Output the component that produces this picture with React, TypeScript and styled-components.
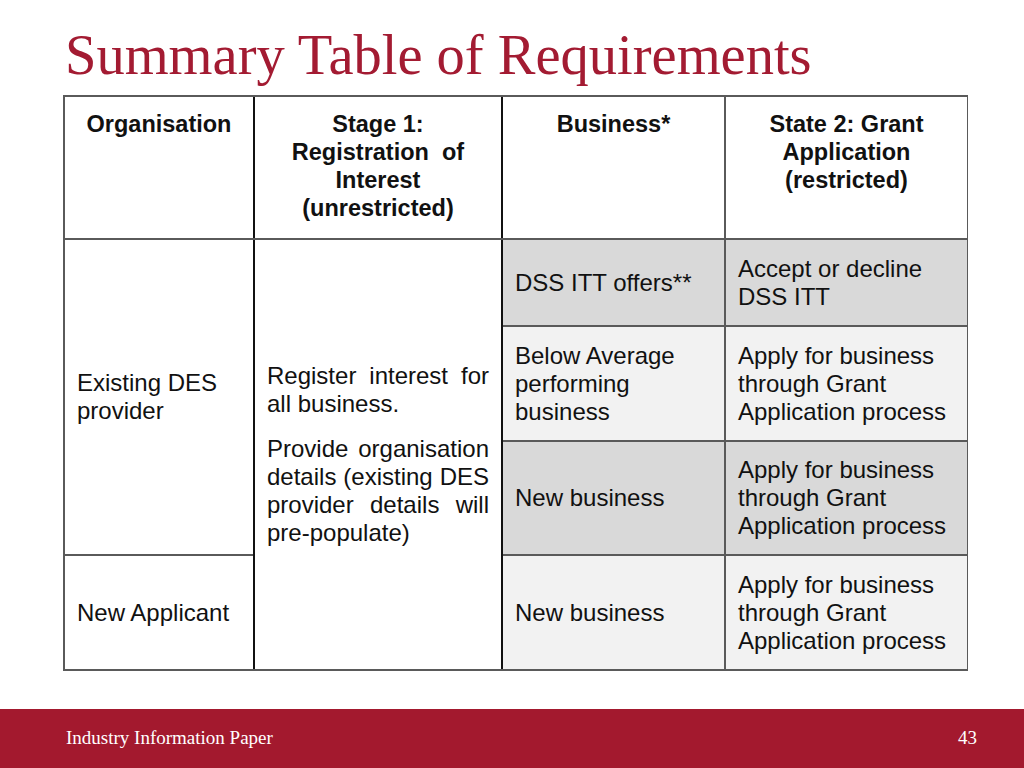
import * as React from 'react';
import styled, { createGlobalStyle } from 'styled-components';

const GlobalStyle = createGlobalStyle`
  html, body {
    margin: 0;
    padding: 0;
    background: #ffffff;
  }
  body {
    font-family: 'Liberation Sans', Arial, sans-serif;
  }
`;

const Slide = styled.div`
  width: 1024px;
  height: 768px;
  display: flex;
  flex-direction: column;
  overflow: hidden;
  background: #ffffff;
`;

const Title = styled.h1`
  margin: 0;
  padding: 20px 0 0 65px;
  height: 75px;
  font-family: 'Liberation Serif', 'Times New Roman', serif;
  font-weight: normal;
  font-size: 56.5px;
  line-height: 70px;
  color: #a31b32;
`;

const Table = styled.div`
  margin: 0 0 0 63px;
  width: 905px;
  display: grid;
  grid-template-columns: 188px 246px 221px 241px;
  grid-template-rows: 141px 85px 113px 112px 113px;
  gap: 2px;
  padding: 2px;
  box-sizing: border-box;
  background: #5a5a5a;
`;

type Shade = 'white' | 'dark' | 'light';

const Cell = styled.div<{ $shade?: Shade; $head?: boolean; $dividers?: boolean }>`
  background: ${p => (p.$shade === 'dark' ? '#d9d9d9' : p.$shade === 'light' ? '#f2f2f2' : '#ffffff')};
  color: #111111;
  font-size: ${p => (p.$head ? '23.5px' : '24px')};
  font-weight: ${p => (p.$head ? 'bold' : 'normal')};
  line-height: 28px;
  text-align: ${p => (p.$head ? 'center' : 'left')};
  padding: ${p => (p.$head ? '13px 12px 0' : '0 12px')};
  display: flex;
  flex-direction: column;
  justify-content: ${p => (p.$head ? 'flex-start' : 'center')};
  box-sizing: border-box;
  box-shadow: ${p => (p.$dividers ? '-2px 0 0 #111, 2px 0 0 #111' : 'none')};
`;

const Paragraph = styled.div`
  & + & {
    margin-top: 17px;
  }
`;

const Line = styled.div<{ $justify?: boolean }>`
  text-align: ${p => (p.$justify ? 'justify' : 'left')};
  text-align-last: ${p => (p.$justify ? 'justify' : 'left')};
`;

const Footer = styled.footer`
  margin-top: auto;
  height: 59px;
  background: #a3192e;
  display: flex;
  align-items: center;
  justify-content: space-between;
  padding: 0 47px 0 66px;
  font-family: 'Liberation Serif', 'Times New Roman', serif;
  font-size: 19px;
  color: #ffffff;
`;

const FooterText = styled.span`
  padding-bottom: 2px;
`;

const GrantSteps = () => (
  <>
    <div>Apply for business</div>
    <div>through Grant</div>
    <div>Application process</div>
  </>
);

const App = () => (
  <>
    <GlobalStyle />
    <Slide>
      <Title>Summary Table of Requirements</Title>
      <Table>
        <Cell $head>Organisation</Cell>
        <Cell $head $dividers>
          Stage 1:
          <br />
          Registration&nbsp; of
          <br />
          Interest
          <br />
          (unrestricted)
        </Cell>
        <Cell $head>Business*</Cell>
        <Cell $head>
          State 2: Grant
          <br />
          Application
          <br />
          (restricted)
        </Cell>

        <Cell style={{ gridColumn: 1, gridRow: '2 / 5' }}>
          <div>Existing DES</div>
          <div>provider</div>
        </Cell>
        <Cell $dividers style={{ gridColumn: 2, gridRow: '2 / 6' }}>
          <Paragraph>
            <Line $justify>Register interest for</Line>
            <Line>all business.</Line>
          </Paragraph>
          <Paragraph>
            <Line $justify>Provide organisation</Line>
            <Line $justify>details (existing DES</Line>
            <Line $justify>provider details will</Line>
            <Line>pre-populate)</Line>
          </Paragraph>
        </Cell>

        <Cell $shade="dark">DSS ITT offers**</Cell>
        <Cell $shade="dark">
          <div>Accept or decline</div>
          <div>DSS ITT</div>
        </Cell>

        <Cell $shade="light">
          <div>Below Average</div>
          <div>performing</div>
          <div>business</div>
        </Cell>
        <Cell $shade="light">
          <GrantSteps />
        </Cell>

        <Cell $shade="dark">New business</Cell>
        <Cell $shade="dark">
          <GrantSteps />
        </Cell>

        <Cell style={{ gridColumn: 1, gridRow: 5 }}>New Applicant</Cell>
        <Cell $shade="light">New business</Cell>
        <Cell $shade="light">
          <GrantSteps />
        </Cell>
      </Table>
      <Footer>
        <FooterText>Industry Information Paper</FooterText>
        <FooterText>43</FooterText>
      </Footer>
    </Slide>
  </>
);

export default App;
